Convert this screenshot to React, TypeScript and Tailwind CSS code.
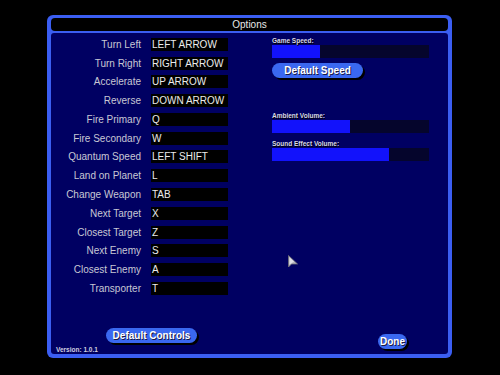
/**
 * Options screen — key bindings on the left, speed/volume sliders on the right.
 */

const FONT = { fontFamily: '"Liberation Sans", Arial, sans-serif' };

const bindings = [
  { label: 'Turn Left', key: 'LEFT ARROW' },
  { label: 'Turn Right', key: 'RIGHT ARROW' },
  { label: 'Accelerate', key: 'UP ARROW' },
  { label: 'Reverse', key: 'DOWN ARROW' },
  { label: 'Fire Primary', key: 'Q' },
  { label: 'Fire Secondary', key: 'W' },
  { label: 'Quantum Speed', key: 'LEFT SHIFT' },
  { label: 'Land on Planet', key: 'L' },
  { label: 'Change Weapon', key: 'TAB' },
  { label: 'Next Target', key: 'X' },
  { label: 'Closest Target', key: 'Z' },
  { label: 'Next Enemy', key: 'S' },
  { label: 'Closest Enemy', key: 'A' },
  { label: 'Transporter', key: 'T' },
];

function Slider({ label, fill }: { label: string; fill: number }) {
  return (
    <div>
      <p className="text-[6.5px] leading-[8px] font-bold text-[#d8d8e8] [text-shadow:1px_1px_0_#000]">{label}</p>
      <div className="h-[13px] w-[157px] bg-[#05052c]">
        <div className="h-full bg-[#1212fb]" style={{ width: fill }} />
      </div>
    </div>
  );
}

function PillButton({ children, className }: { children: string; className: string }) {
  return (
    <button
      className={`h-[15px] rounded-full bg-[#3a68f0] text-[10px] leading-[15px] font-bold text-white shadow-[2px_2px_0_#000] [text-shadow:1px_1px_0_#1a1a40] ${className}`}
    >
      {children}
    </button>
  );
}

export default function App() {
  return (
    <div className="relative w-[500px] h-[375px] bg-black pt-[15px] pl-[47px]" style={FONT}>
      {/* Frame */}
      <div className="w-[405px] h-[343px] rounded-[6px] bg-[#3b5ef2] px-[4px] pt-[3px] pb-[4px] flex flex-col gap-[2px]">
        <div className="h-[13px] rounded-[4px] bg-black text-center text-[10px] leading-[13px] text-[#e8e8e8]">
          Options
        </div>

        <div className="flex-1 rounded-[3px] bg-[#000062] flex flex-col">
          <div className="flex pt-[2px]">
            {/* Key bindings */}
            <div className="flex flex-col">
              {bindings.map((b) => (
                <div key={b.label} className="h-[18.77px] flex items-center gap-[10px] text-[10px]">
                  <span className="w-[90px] text-right text-[#c8c8d4]">{b.label}</span>
                  <span className="w-[77px] h-[13px] bg-black pl-[1px] leading-[13px] text-[#ececec]">
                    {b.key}
                  </span>
                </div>
              ))}
            </div>

            {/* Speed & volume */}
            <div className="ml-[44px] pt-[2px] flex flex-col">
              <Slider label="Game Speed:" fill={48} />
              <PillButton className="mt-[5px] w-[91px]">Default Speed</PillButton>
              <div className="mt-[34px]">
                <Slider label="Ambient Volume:" fill={78} />
              </div>
              <div className="mt-[7px]">
                <Slider label="Sound Effect Volume:" fill={117} />
              </div>
            </div>
          </div>

          <div className="flex-1" />

          <div className="flex items-end">
            <div className="w-[327px] flex flex-col">
              <PillButton className="ml-[55px] w-[91px]">Default Controls</PillButton>
              <span className="ml-[5px] mt-[3px] text-[6.5px] leading-[8px] font-bold text-[#d0d0e0]">
                Version: 1.0.1
              </span>
            </div>
            <PillButton className="mb-[5px] w-[29px]">Done</PillButton>
          </div>
        </div>
      </div>

      {/* Mouse cursor */}
      <svg className="absolute left-[288px] top-[255px]" width="10" height="14" viewBox="0 0 10 14">
        <path d="M0.5 0.5 L0.5 12 L3.5 9 L9.5 9 Z" fill="#b8b8c0" stroke="#70707a" strokeWidth="0.8" />
        <path d="M1.5 2.5 L1.5 9.5 L6 6.5 Z" fill="#e0e0e6" />
      </svg>
    </div>
  );
}
